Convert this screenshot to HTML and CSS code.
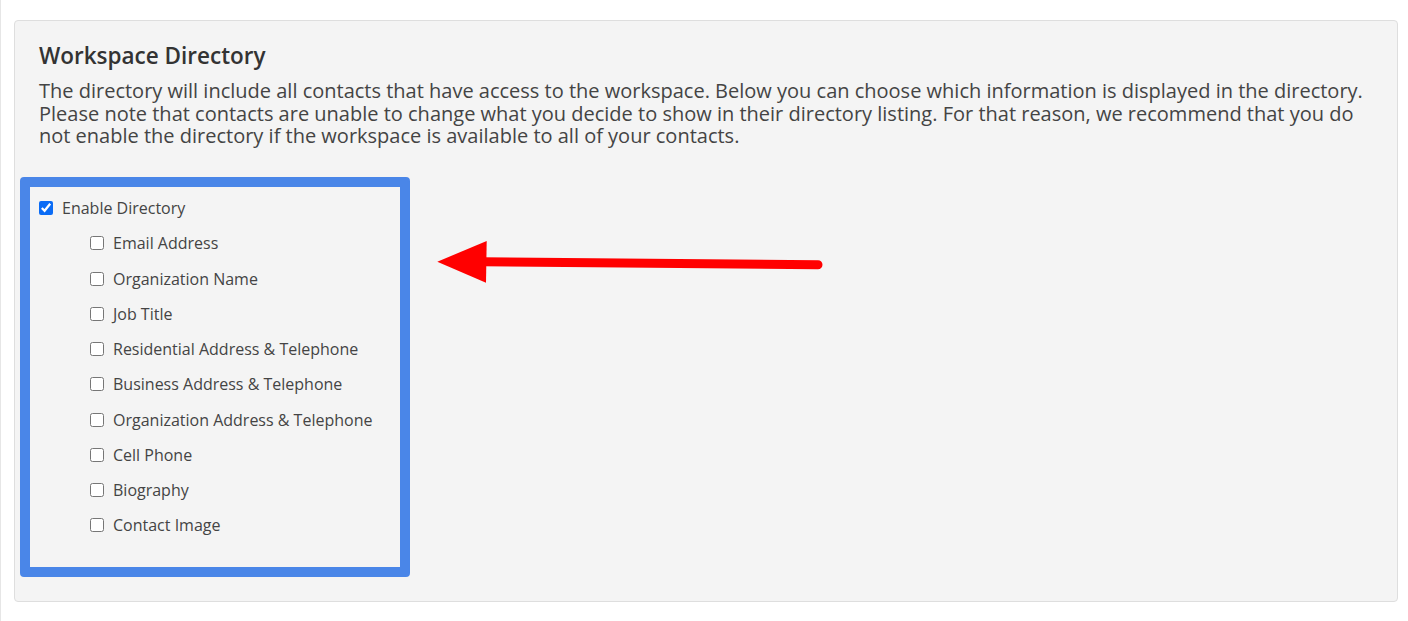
FILE: index.html
```html
<!DOCTYPE html>
<html lang="en">

<head>
    <meta charset="UTF-8">
    <meta name="viewport" content="width=device-width, initial-scale=1.0">
    <title>Workspace Directory</title>
    <link rel="stylesheet" href="styles.css">
</head>

<body>
    <div class="page">
        <div class="panel">
            <h2 class="panel-title">Workspace Directory</h2>
            <p class="panel-text">
                The directory will include all contacts that have access to the workspace. Below you can choose which information is displayed in the directory.
                Please note that contacts are unable to change what you decide to show in their directory listing. For that reason, we recommend that you do
                not enable the directory if the workspace is available to all of your contacts.
            </p>

            <div class="directory-options">
                <label class="option">
                    <input type="checkbox" checked>
                    <span>Enable Directory</span>
                </label>
                <div class="sub-options">
                    <label class="option"><input type="checkbox"><span>Email Address</span></label>
                    <label class="option"><input type="checkbox"><span>Organization Name</span></label>
                    <label class="option"><input type="checkbox"><span>Job Title</span></label>
                    <label class="option"><input type="checkbox"><span>Residential Address &amp; Telephone</span></label>
                    <label class="option"><input type="checkbox"><span>Business Address &amp; Telephone</span></label>
                    <label class="option"><input type="checkbox"><span>Organization Address &amp; Telephone</span></label>
                    <label class="option"><input type="checkbox"><span>Cell Phone</span></label>
                    <label class="option"><input type="checkbox"><span>Biography</span></label>
                    <label class="option"><input type="checkbox"><span>Contact Image</span></label>
                </div>
            </div>

            <!-- annotation arrow -->
            <svg class="arrow" width="400" height="55" viewBox="0 0 400 55">
                <line x1="52" y1="26.7" x2="388" y2="29.7" stroke="#ff0000" stroke-width="9" stroke-linecap="round" />
                <polygon points="7.3,26.7 56.7,6 56,47.7" fill="#ff0000" />
            </svg>
        </div>
    </div>
</body>

</html>
```

FILE: styles.css
```css
* {
    margin: 0;
    padding: 0;
    box-sizing: border-box;
}

body {
    font-family: "Open Sans", sans-serif;
    background-color: #fff;
    color: #444;
}

.page {
    min-height: 621px;
    border-left: 1px solid #e6e6e6;
    padding: 20px 10px 20px 13px;
}

.panel {
    position: relative;
    background-color: #f4f4f4;
    border: 1px solid #dedede;
    border-radius: 4px;
    padding: 20px 20px 24px 24px;
}

.panel-title {
    font-size: 22.5px;
    font-weight: 600;
    color: #333;
    line-height: 30px;
    margin-bottom: 9px;
}

.panel-text {
    font-size: 20px;
    line-height: 22.5px;
    color: #444;
    margin-bottom: 29px;
}

.directory-options {
    width: 390px;
    height: 400px;
    margin-left: -19px;
    border: 10px solid #4a86e8;
    border-radius: 4px;
    padding: 4px 0 0 8px;
}

.option {
    display: flex;
    align-items: center;
    height: 35.25px;
    font-size: 16px;
    color: #444;
}

.option input {
    width: 14px;
    height: 14px;
    margin: 0 9px 0 1px;
    accent-color: #0b6cf5;
}

.sub-options {
    padding-left: 51px;
}

.arrow {
    position: absolute;
    left: 415px;
    top: 214px;
}
```
